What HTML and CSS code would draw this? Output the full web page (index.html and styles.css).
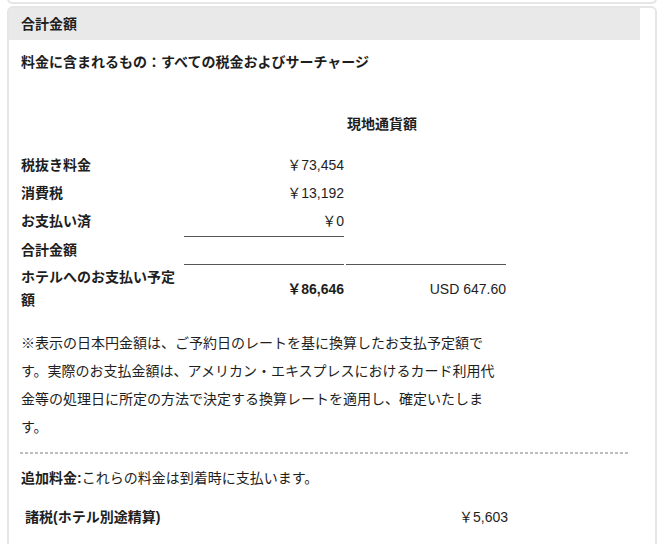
FILE: index.html
```html
<!DOCTYPE html>
<html lang="ja">
<head>
<meta charset="utf-8">
<title>合計金額</title>
<link rel="stylesheet" href="styles.css">
</head>
<body>
<div class="page">
  <div class="prev-card"></div>
  <section class="card">
    <div class="card-inner">
      <h2 class="card-title">合計金額</h2>
      <p class="includes">料金に含まれるもの：すべての税金およびサーチャージ</p>

      <div class="price-grid">
        <div class="cell head-empty"></div>
        <div class="cell head-empty"></div>
        <div class="cell head">現地通貨額</div>

        <div class="cell label">税抜き料金</div>
        <div class="cell num">￥73,454</div>
        <div class="cell"></div>

        <div class="cell label">消費税</div>
        <div class="cell num">￥13,192</div>
        <div class="cell"></div>

        <div class="cell label row-paid">お支払い済</div>
        <div class="cell num row-paid ruled">￥0</div>
        <div class="cell row-paid"></div>

        <div class="cell label row-total">合計金額</div>
        <div class="cell num row-total ruled"></div>
        <div class="cell num row-total ruled"></div>

        <div class="cell label row-due">ホテルへのお支払い予定額</div>
        <div class="cell num row-due strong">￥86,646</div>
        <div class="cell num row-due">USD 647.60</div>
      </div>

      <p class="note">※表示の日本円金額は、ご予約日のレートを基に換算したお支払予定額です。実際のお支払金額は、アメリカン・エキスプレスにおけるカード利用代金等の処理日に所定の方法で決定する換算レートを適用し、確定いたします。</p>

      <div class="divider"></div>

      <p class="extra"><strong>追加料金:</strong>これらの料金は到着時に支払います。</p>

      <div class="extra-row">
        <span class="extra-label">諸税(ホテル別途精算)</span>
        <span class="extra-value">￥5,603</span>
      </div>
    </div>
  </section>
</div>
</body>
</html>
```

FILE: styles.css
```css
* {
  box-sizing: border-box;
}

html, body {
  margin: 0;
  padding: 0;
  background: #ffffff;
}

body {
  font-family: "Liberation Sans", "Noto Sans CJK JP", sans-serif;
  font-size: 14px;
  color: #1e1e1e;
}

.page {
  padding-left: 7px;
  width: 666px;
}

.prev-card {
  width: 650px;
  height: 5px;
  margin-top: -1px;
  border: 2px solid #e6e6e6;
  border-top: none;
  border-radius: 0 0 6px 6px;
}

.card {
  width: 650px;
  height: 560px;
  margin-top: 2px;
  border: 2px solid #e6e6e6;
  border-bottom: none;
  border-radius: 6px 6px 0 0;
}

.card-inner {
  padding-right: 15px;
}

.card-title {
  margin: 0;
  height: 32px;
  line-height: 32px;
  padding-left: 12px;
  background: #e9e9e9;
  font-size: 14px;
  font-weight: 700;
}

.includes {
  margin: 11px 0 0 12px;
  line-height: 22px;
  font-weight: 700;
}

.price-grid {
  display: grid;
  grid-template-columns: 161px 160px 160px;
  column-gap: 2px;
  margin: 37px 0 0 12px;
}

.cell {
  line-height: 28px;
  height: 28px;
  padding-top: 1px;
}

.head-empty,
.head {
  height: 40px;
  padding-top: 0;
}

.head {
  font-weight: 700;
  text-align: left;
  padding-left: 1px;
}

.label {
  font-weight: 700;
}

.num {
  text-align: right;
}

.ruled {
  border-bottom: 1px solid #555;
}

.row-paid {
  height: 31px;
}

.row-total {
  height: 28px;
  line-height: 26px;
  padding-top: 0;
}

.row-due {
  height: 48px;
  line-height: 23px;
  padding-top: 1px;
}

.row-due.num {
  line-height: 48px;
  padding-top: 0;
}

.strong {
  font-weight: 700;
}

.note {
  margin: 16px 0 0 12px;
  width: 480px;
  line-height: 28px;
}

.divider {
  margin: 11px 0 0 11px;
  width: 610px;
  height: 2px;
  background: repeating-linear-gradient(to right, #bdbdbd 0 3px, transparent 3px 5px);
}

.extra {
  margin: 13px 0 0 12px;
  line-height: 22px;
}

.extra strong {
  font-weight: 700;
}

.extra-row {
  display: flex;
  justify-content: space-between;
  width: 483px;
  margin: 17px 0 0 16px;
  line-height: 22px;
}

.extra-label {
  font-weight: 700;
}
```
